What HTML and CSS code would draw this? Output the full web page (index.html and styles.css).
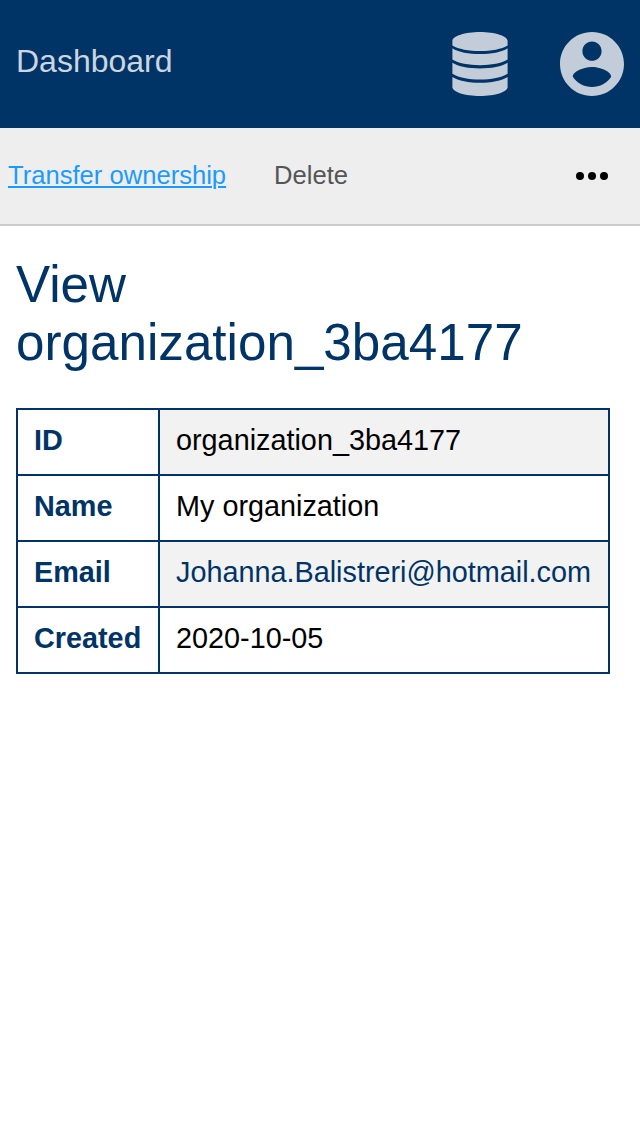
FILE: index.html
```html
<!DOCTYPE html>
<html lang="en">
<head>
<meta charset="utf-8">
<title>Dashboard</title>
<link rel="stylesheet" href="styles.css">
</head>
<body>
<header class="topbar">
  <a class="brand">Dashboard</a>
  <div class="tools">
    <svg class="icon-db" viewBox="0 0 56 64"><path d="M.4 9C.4 4 13 0 28 0S55.600 4 55.600 9V13.500C50 17.200 39 19 28 19S6 17.200.4 13.500ZM.4 16.200C6 20.200 17 22 28 22S50 20.200 55.600 16.200V27.500C50 31.200 39 33.200 28 33.200S6 31.200.4 27.500ZM.4 30.700C6 34.500 17 36.400 28 36.400S50 34.500 55.600 30.700V41.700C50 45.500 39 47.500 28 47.500S6 45.500.4 41.700ZM.4 44.900C6 48.800 17 50.700 28 50.700S50 48.800 55.600 44.900V55C55.600 60 43 64 28 64S.4 60 .4 55Z"/></svg>
    <svg class="icon-user" viewBox="2 2 20 20"><path d="M12 2C6.480 2 2 6.480 2 12s4.480 10 10 10 10-4.480 10-10S17.520 2 12 2zm0 3c1.660 0 3 1.340 3 3s-1.340 3-3 3-3-1.340-3-3 1.340-3 3-3zm0 14.200c-2.500 0-4.710-1.280-6-3.220.03-1.990 4-3.080 6-3.080 1.990 0 5.970 1.090 6 3.080-1.290 1.940-3.500 3.220-6 3.220z"/></svg>
  </div>
</header>
<nav class="actions">
  <a class="action active">Transfer ownership</a>
  <a class="action">Delete</a>
  <svg class="more" viewBox="0 0 32 8"><circle cx="4" cy="4" r="4"/><circle cx="16" cy="4" r="4"/><circle cx="28" cy="4" r="4"/></svg>
</nav>
<main class="content">
  <h1 class="title">View organization_3ba4177</h1>
  <table class="details">
    <tr><th>ID</th><td>organization_3ba4177</td></tr>
    <tr><th>Name</th><td>My organization</td></tr>
    <tr><th>Email</th><td><a class="email">Johanna.Balistreri@hotmail.com</a></td></tr>
    <tr><th>Created</th><td>2020-10-05</td></tr>
  </table>
</main>
</body>
</html>
```
FILE: styles.css
```css
body { margin: 0; background: #fff; color: #000; font-family: "Liberation Sans", Arial, sans-serif; }
.topbar { display: flex; justify-content: space-between; align-items: center; box-sizing: border-box; height: 128px; padding: 0 16px; background: #003366; }
.brand { padding-bottom: 6px; font-size: 32px; line-height: 40px; color: #ccd6e0; }
.tools { display: flex; gap: 52px; }
.icon-db { width: 56px; height: 64px; fill: #c2cdd9; }
.icon-user { width: 64px; height: 64px; fill: #c2cdd9; }
.actions { display: flex; align-items: center; gap: 48px; box-sizing: border-box; height: 98px; padding: 0 32px 0 8px; border-bottom: 2px solid #ccc; background: #eee; }
.action { padding-bottom: 2px; font-size: 25.6px; line-height: 32px; color: #555; }
.active { color: #1a9cff; text-decoration: underline; text-decoration-thickness: 2px; text-underline-offset: 2px; }
.more { width: 32px; height: 8px; margin-left: auto; }
.content { padding: 30px 16px; }
.title { margin: 0 0 36px; font-size: 51.2px; line-height: 58px; font-weight: 400; color: #003366; }
.details { width: 594px; border-collapse: collapse; table-layout: fixed; font-size: 28.8px; line-height: 32px; }
.details th, .details td { box-sizing: border-box; padding: 14px 16px 18px; border: 2px solid #003366; text-align: left; }
.details th { width: 142px; color: #003366; }
.details tr:nth-child(odd) td { background: #f2f2f2; }
.email { color: #003366; }
```
